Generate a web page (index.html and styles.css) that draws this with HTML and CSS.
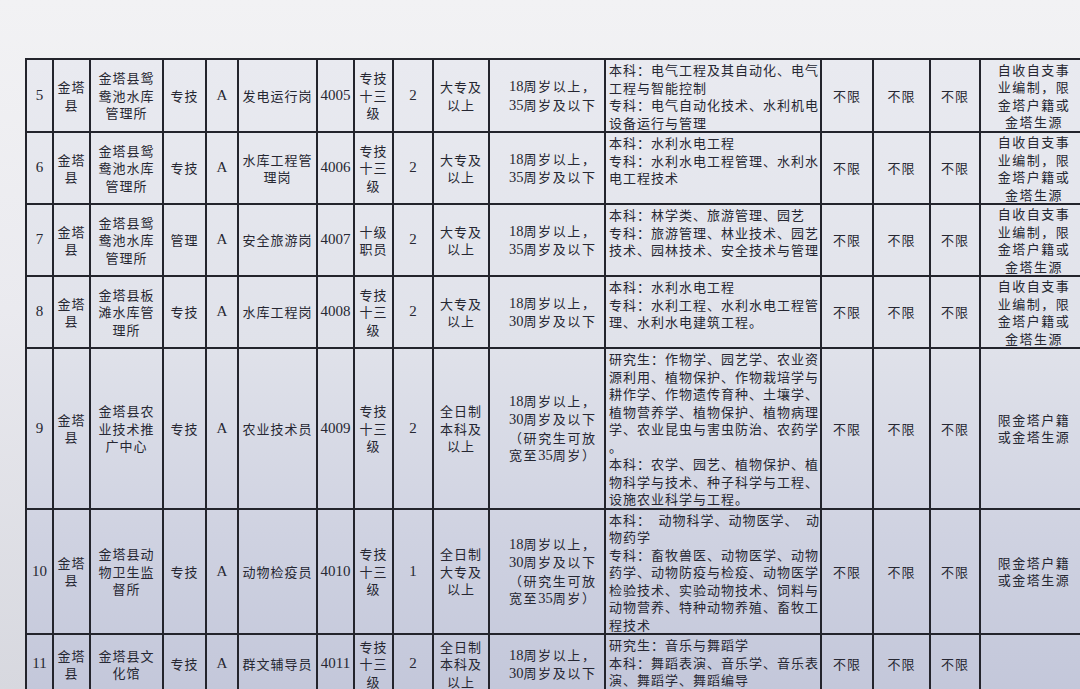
FILE: index.html
```html
<!DOCTYPE html>
<html lang="zh-CN">
<head>
<meta charset="utf-8">
<title>金塔县事业单位招聘岗位表</title>
<link rel="stylesheet" href="styles.css">
</head>
<body>
<div class="sheet">
<table class="posts">
<colgroup>
<col class="c-no"><col class="c-county"><col class="c-unit"><col class="c-type"><col class="c-cls"><col class="c-post"><col class="c-code"><col class="c-grade"><col class="c-num"><col class="c-edu"><col class="c-age"><col class="c-major"><col class="c-x"><col class="c-y"><col class="c-z"><col class="c-note">
</colgroup>
<tbody>
<tr class="r5">
<td class="num">5</td><td>金塔<br>县</td><td>金塔县鸳<br>鸯池水库<br>管理所</td><td>专技</td><td class="num">A</td><td>发电运行岗</td><td class="num">4005</td><td>专技<br>十三<br>级</td><td class="num">2</td><td>大专及<br>以上</td>
<td class="age"><span class="d">18</span>周岁以上，<br><span class="d">35</span>周岁及以下</td>
<td class="major">本科：电气工程及其自动化、电气<br>工程与智能控制<br>专科：电气自动化技术、水利机电<br>设备运行与管理</td>
<td>不限</td><td>不限</td><td>不限</td><td class="note">自收自支事<br>业编制，限<br>金塔户籍或<br>金塔生源</td>
</tr>
<tr class="r6">
<td class="num">6</td><td>金塔<br>县</td><td>金塔县鸳<br>鸯池水库<br>管理所</td><td>专技</td><td class="num">A</td><td>水库工程管<br>理岗</td><td class="num">4006</td><td>专技<br>十三<br>级</td><td class="num">2</td><td>大专及<br>以上</td>
<td class="age"><span class="d">18</span>周岁以上，<br><span class="d">35</span>周岁及以下</td>
<td class="major">本科：水利水电工程<br>专科：水利水电工程管理、水利水<br>电工程技术</td>
<td>不限</td><td>不限</td><td>不限</td><td class="note">自收自支事<br>业编制，限<br>金塔户籍或<br>金塔生源</td>
</tr>
<tr class="r7">
<td class="num">7</td><td>金塔<br>县</td><td>金塔县鸳<br>鸯池水库<br>管理所</td><td>管理</td><td class="num">A</td><td>安全旅游岗</td><td class="num">4007</td><td>十级<br>职员</td><td class="num">2</td><td>大专及<br>以上</td>
<td class="age"><span class="d">18</span>周岁以上，<br><span class="d">35</span>周岁及以下</td>
<td class="major">本科：林学类、旅游管理、园艺<br>专科：旅游管理、林业技术、园艺<br>技术、园林技术、安全技术与管理</td>
<td>不限</td><td>不限</td><td>不限</td><td class="note">自收自支事<br>业编制，限<br>金塔户籍或<br>金塔生源</td>
</tr>
<tr class="r8">
<td class="num">8</td><td>金塔<br>县</td><td>金塔县板<br>滩水库管<br>理所</td><td>专技</td><td class="num">A</td><td>水库工程岗</td><td class="num">4008</td><td>专技<br>十三<br>级</td><td class="num">2</td><td>大专及<br>以上</td>
<td class="age"><span class="d">18</span>周岁以上，<br><span class="d">30</span>周岁及以下</td>
<td class="major">本科：水利水电工程<br>专科：水利工程、水利水电工程管<br>理、水利水电建筑工程。</td>
<td>不限</td><td>不限</td><td>不限</td><td class="note">自收自支事<br>业编制，限<br>金塔户籍或<br>金塔生源</td>
</tr>
<tr class="r9">
<td class="num">9</td><td>金塔<br>县</td><td>金塔县农<br>业技术推<br>广中心</td><td>专技</td><td class="num">A</td><td>农业技术员</td><td class="num">4009</td><td>专技<br>十三<br>级</td><td class="num">2</td><td>全日制<br>本科及<br>以上</td>
<td class="age"><span class="d">18</span>周岁以上，<br><span class="d">30</span>周岁及以下<br>（研究生可放<br>宽至<span class="d">35</span>周岁）</td>
<td class="major">研究生：作物学、园艺学、农业资<br>源利用、植物保护、作物栽培学与<br>耕作学、作物遗传育种、土壤学、<br>植物营养学、植物保护、植物病理<br>学、农业昆虫与害虫防治、农药学<br>。<br>本科：农学、园艺、植物保护、植<br>物科学与技术、种子科学与工程、<br>设施农业科学与工程。</td>
<td>不限</td><td>不限</td><td>不限</td><td class="note">限金塔户籍<br>或金塔生源</td>
</tr>
<tr class="r10">
<td class="num">10</td><td>金塔<br>县</td><td>金塔县动<br>物卫生监<br>督所</td><td>专技</td><td class="num">A</td><td>动物检疫员</td><td class="num">4010</td><td>专技<br>十三<br>级</td><td class="num">1</td><td>全日制<br>大专及<br>以上</td>
<td class="age"><span class="d">18</span>周岁以上，<br><span class="d">30</span>周岁及以下<br>（研究生可放<br>宽至<span class="d">35</span>周岁）</td>
<td class="major">本科：　动物科学、动物医学、　动<br>物药学<br>专科：畜牧兽医、动物医学、动物<br>药学、动物防疫与检疫、动物医学<br>检验技术、实验动物技术、饲料与<br>动物营养、特种动物养殖、畜牧工<br>程技术</td>
<td>不限</td><td>不限</td><td>不限</td><td class="note">限金塔户籍<br>或金塔生源</td>
</tr>
<tr class="r11">
<td class="num">11</td><td>金塔<br>县</td><td>金塔县文<br>化馆</td><td>专技</td><td class="num">A</td><td>群文辅导员</td><td class="num">4011</td><td>专技<br>十三<br>级</td><td class="num">2</td><td>全日制<br>本科及<br>以上</td>
<td class="age"><span class="d">18</span>周岁以上，<br><span class="d">30</span>周岁及以下</td>
<td class="major">研究生：音乐与舞蹈学<br>本科：舞蹈表演、音乐学、音乐表<br>演、舞蹈学、舞蹈编导</td>
<td>不限</td><td>不限</td><td>不限</td><td class="note"></td>
</tr>
</tbody>
</table>
</div>
</body>
</html>
```

FILE: styles.css
```css
html, body {
  margin: 0;
  padding: 0;
  width: 1080px;
  height: 689px;
  overflow: hidden;
}
body {
  background: linear-gradient(180deg, #f2f2f4 0%, #eaeaef 45%, #d7d8df 100%);
  font-family: "Noto Sans CJK SC", "Liberation Serif", sans-serif;
  color: #262732;
}
.sheet {
  padding: 58px 0 0 25px;
}
.posts {
  border-collapse: collapse;
  table-layout: fixed;
  width: 1062px;
  background: linear-gradient(180deg, #e9eaf0 0%, #e0e2ea 45%, #cfd2e1 75%, #c3c7da 100%);
  font-size: 13px;
  line-height: 17.5px;
  letter-spacing: 1px;
}
.posts td {
  border: 2px solid #23242c;
  padding: 0 2px;
  text-align: center;
  vertical-align: middle;
  white-space: nowrap;
  overflow: hidden;
}
.c-no { width: 27px; }
.c-county { width: 37px; }
.c-unit { width: 73px; }
.c-type { width: 43px; }
.c-cls { width: 32px; }
.c-post { width: 79px; }
.c-code { width: 37px; }
.c-grade { width: 39px; }
.c-num { width: 40px; }
.c-edu { width: 56px; }
.c-age { width: 116px; }
.c-major { width: 216px; }
.c-x { width: 52px; }
.c-y { width: 57px; }
.c-z { width: 50px; }
.c-note { width: 108px; }

.posts td.num {
  font-family: "Liberation Serif", serif;
  font-size: 15px;
  letter-spacing: 0;
}
.d {
  font-family: "Liberation Serif", serif;
  font-size: 14.5px;
  letter-spacing: 0;
}
.posts td.age {
  text-align: left;
  padding-left: 19px;
  font-size: 13px;
  letter-spacing: 1.6px;
}
.posts td.major {
  text-align: left;
  vertical-align: top;
  padding: 1px 2px 0 3px;
  font-size: 13px;
  letter-spacing: 1px;
}
.posts td.note {
  padding: 0;
  letter-spacing: 1.5px;
}
.r5 { height: 73px; }
.r6 { height: 72px; }
.r7 { height: 71px; }
.r8 { height: 71px; }
.r9 { height: 160px; }
.r10 { height: 125px; }
.r11 { height: 60px; }
```
